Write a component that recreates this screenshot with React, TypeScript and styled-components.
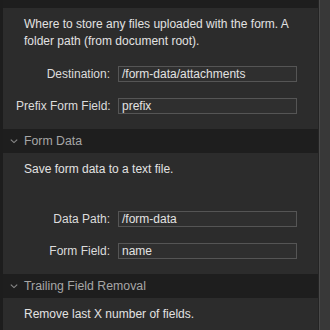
import React from "react";
import styled, { createGlobalStyle } from "styled-components";

const Global = createGlobalStyle`
  html, body { margin: 0; padding: 0; background: #2c2c2c; }
  body { font-family: "Liberation Sans", Arial, sans-serif; }
`;

const Frame = styled.div`
  width: 330px;
  height: 330px;
  display: flex;
  overflow: hidden;
  background: #2c2c2c;
`;

const LeftEdge = styled.div`
  width: 3px;
  flex: none;
  background: #1d1d1d;
`;

const Panel = styled.div`
  width: 315px;
  flex: none;
  display: flex;
  flex-direction: column;
  background: #2c2c2c;
  border-right: 1px solid #242424;
`;

const Gutter = styled.div`
  flex: 1;
  background: #383838;
  border-left: 1px solid #4a4a4a;
`;

const Header = styled.div<{ $first?: boolean }>`
  height: 24px;
  flex: none;
  display: flex;
  align-items: center;
  gap: 6px;
  padding-left: 7px;
  margin-top: ${(p) => (p.$first ? "-16px" : "0")};
  background: #1e1e1e;
  color: #a6a6a6;
  font-size: 12.3px;
`;

const Chevron = styled.svg`
  width: 8px;
  height: 8px;
  flex: none;
`;

const Body = styled.div<{ $gap: number }>`
  display: flex;
  flex-direction: column;
  padding: 8px 0 15px 21px;
  gap: ${(p) => p.$gap}px;
`;

const Desc = styled.div`
  font-size: 12px;
  line-height: 17px;
  color: #e2e2e2;
  width: 280px;
`;

const Rows = styled.div`
  display: flex;
  flex-direction: column;
  gap: 16px;
  margin-left: -8px;
`;

const Row = styled.div`
  display: grid;
  grid-template-columns: 94px 179px;
  column-gap: 8px;
  align-items: center;
  height: 16px;
`;

const Label = styled.span`
  text-align: right;
  font-size: 12px;
  color: #dcdcdc;
  white-space: nowrap;
`;

const Field = styled.div`
  height: 16px;
  box-sizing: border-box;
  border: 1px solid #555555;
  background: #2f2f2f;
  color: #e2e2e2;
  font-size: 12px;
  line-height: 14px;
  padding-left: 3px;
  white-space: nowrap;
  overflow: hidden;
`;

const ChevronIcon = () => (
  <Chevron viewBox="0 0 8 8">
    <path d="M0.8 2.6 L4 5.6 L7.2 2.6" fill="none" stroke="#8a8a8a" strokeWidth="1.1" />
  </Chevron>
);

type RowData = { label: string; value: string };

const Section = ({
  title,
  desc,
  rows,
  first,
  gap,
}: {
  title: string;
  desc: string;
  rows: RowData[];
  first?: boolean;
  gap: number;
}) => (
  <>
    <Header $first={first}>
      <ChevronIcon />
      {title}
    </Header>
    <Body $gap={gap}>
      <Desc>{desc}</Desc>
      {rows.length > 0 && (
        <Rows>
          {rows.map((r) => (
            <Row key={r.label}>
              <Label>{r.label}</Label>
              <Field>{r.value}</Field>
            </Row>
          ))}
        </Rows>
      )}
    </Body>
  </>
);

export default function App() {
  return (
    <>
      <Global />
      <Frame>
        <LeftEdge />
        <Panel>
          <Section
            first
            title="Destination"
            desc="Where to store any files uploaded with the form. A folder path (from document root)."
            gap={16}
            rows={[
              { label: "Destination:", value: "/form-data/attachments" },
              { label: "Prefix Form Field:", value: "prefix" },
            ]}
          />
          <Section
            title="Form Data"
            desc="Save form data to a text file."
            gap={33}
            rows={[
              { label: "Data Path:", value: "/form-data" },
              { label: "Form Field:", value: "name" },
            ]}
          />
          <Section
            title="Trailing Field Removal"
            desc="Remove last X number of fields."
            gap={0}
            rows={[]}
          />
        </Panel>
        <Gutter />
      </Frame>
    </>
  );
}
